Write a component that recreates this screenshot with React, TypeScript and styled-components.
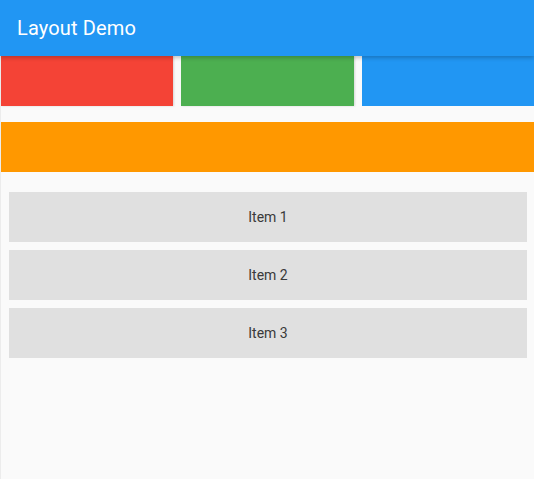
import React from "react";
import styled, { createGlobalStyle } from "styled-components";

const Global = createGlobalStyle`
  html, body { margin: 0; padding: 0; background: #fafafa; }
  body { font-family: Roboto, "Noto Sans", sans-serif; }
  * { box-sizing: border-box; }
`;

const Screen = styled.div`
  width: 534px;
  height: 479px;
  display: flex;
  flex-direction: column;
  background: #fafafa;
  overflow: hidden;
`;

const AppBar = styled.header`
  height: 56px;
  flex: none;
  background: #2196f3;
  display: flex;
  align-items: center;
  padding-left: 17px;
  box-shadow: 0 2px 4px rgba(0, 0, 0, 0.22);
  position: relative;
  z-index: 1;
`;

const Title = styled.h1`
  margin: 0;
  color: #fff;
  font-size: 20px;
  font-weight: 400;
  letter-spacing: 0.15px;
`;

const Body = styled.main`
  flex: 1;
  display: flex;
  flex-direction: column;
  border-left: 1px solid #ececec;
`;

const ColorRow = styled.div`
  display: flex;
  gap: 8px;
  height: 50px;
`;

const ColorBox = styled.div<{ $color: string; $shadow?: boolean }>`
  flex: 1;
  background: ${(p) => p.$color};
  box-shadow: ${(p) => (p.$shadow ? "1px 0 2px rgba(0,0,0,0.15)" : "none")};
`;

const Banner = styled.div`
  margin-top: 16px;
  height: 50px;
  background: #ff9800;
`;

const List = styled.div`
  display: flex;
  flex-direction: column;
  gap: 8px;
  padding: 20px 7px 0 8px;
`;

const Item = styled.div`
  height: 50px;
  background: #e0e0e0;
  display: flex;
  align-items: center;
  justify-content: center;
  font-size: 14px;
  color: #3a3a3a;
`;

export default function App() {
  return (
    <>
      <Global />
      <Screen>
        <AppBar>
          <Title>Layout Demo</Title>
        </AppBar>
        <Body>
          <ColorRow>
            <ColorBox $color="#f44336" $shadow />
            <ColorBox $color="#4caf50" $shadow />
            <ColorBox $color="#2196f3" />
          </ColorRow>
          <Banner />
          <List>
            {["Item 1", "Item 2", "Item 3"].map((t) => (
              <Item key={t}>{t}</Item>
            ))}
          </List>
        </Body>
      </Screen>
    </>
  );
}
